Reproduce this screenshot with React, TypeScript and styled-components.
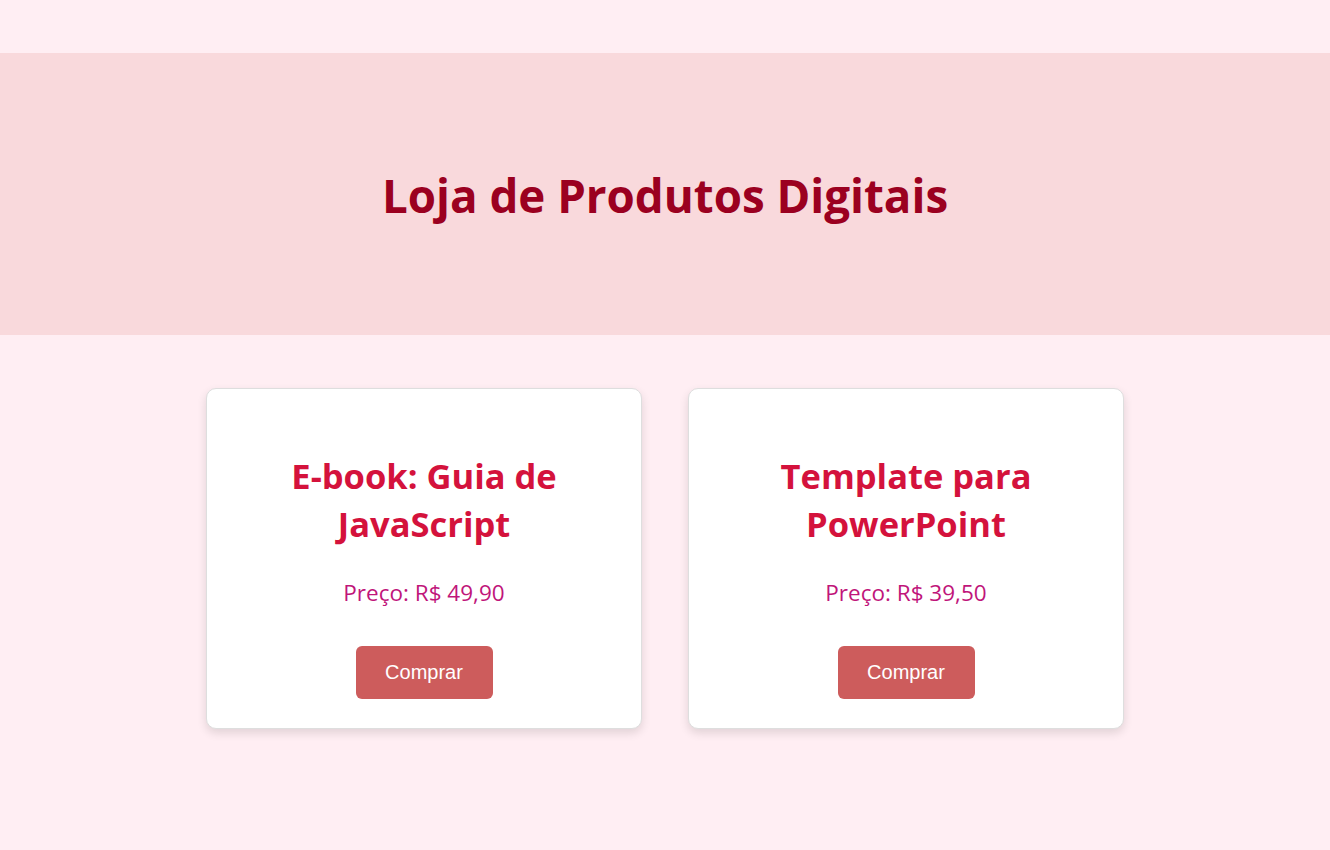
import React from "react";
import styled, { createGlobalStyle } from "styled-components";

const Global = createGlobalStyle`
  html, body { margin: 0; padding: 0; background: #ffeef3; }
  body { font-family: "Open Sans", "Noto Sans", sans-serif; }
`;

const Page = styled.div`
  min-height: 850px;
  padding-top: 53px;
  box-sizing: border-box;
  background: #ffeef3;
`;

const Header = styled.header`
  height: 282px;
  background: #f9d9dc;
  display: flex;
  align-items: center;
  justify-content: center;
`;

const Title = styled.h1`
  margin: 2px 0 0;
  font-size: 45.7px;
  font-weight: 700;
  color: #9b0020;
  line-height: 1.2;
`;

const Grid = styled.main`
  display: flex;
  justify-content: center;
  gap: 46px;
  padding-top: 53px;
`;

const Card = styled.article`
  width: 436px;
  height: 341px;
  box-sizing: border-box;
  background: #ffffff;
  border: 1px solid #dedede;
  border-radius: 10px;
  box-shadow: 0 4px 10px rgba(0, 0, 0, 0.12);
  display: flex;
  flex-direction: column;
  align-items: center;
  padding: 63px 40px 0;
  text-align: center;
`;

const CardTitle = styled.h2`
  margin: 0;
  font-size: 34.5px;
  font-weight: 700;
  line-height: 48px;
  color: #d4123c;
  max-width: 320px;
`;

const Price = styled.p`
  margin: 30px 0 0;
  font-size: 22.5px;
  line-height: 30px;
  color: #c0157a;
`;

const BuyButton = styled.button`
  margin-top: 38px;
  width: 137px;
  height: 53px;
  border: none;
  border-radius: 6px;
  background: #cd5c5c;
  color: #ffffff;
  font-family: "Liberation Sans", Arial, sans-serif;
  font-size: 20px;
  cursor: pointer;
`;

const products = [
  { name: "E-book: Guia de JavaScript", price: "R$ 49,90" },
  { name: "Template para PowerPoint", price: "R$ 39,50" },
];

export default function App() {
  return (
    <Page>
      <Global />
      <Header>
        <Title>Loja de Produtos Digitais</Title>
      </Header>
      <Grid>
        {products.map((p) => (
          <Card key={p.name}>
            <CardTitle>{p.name}</CardTitle>
            <Price>Preço: {p.price}</Price>
            <BuyButton>Comprar</BuyButton>
          </Card>
        ))}
      </Grid>
    </Page>
  );
}
